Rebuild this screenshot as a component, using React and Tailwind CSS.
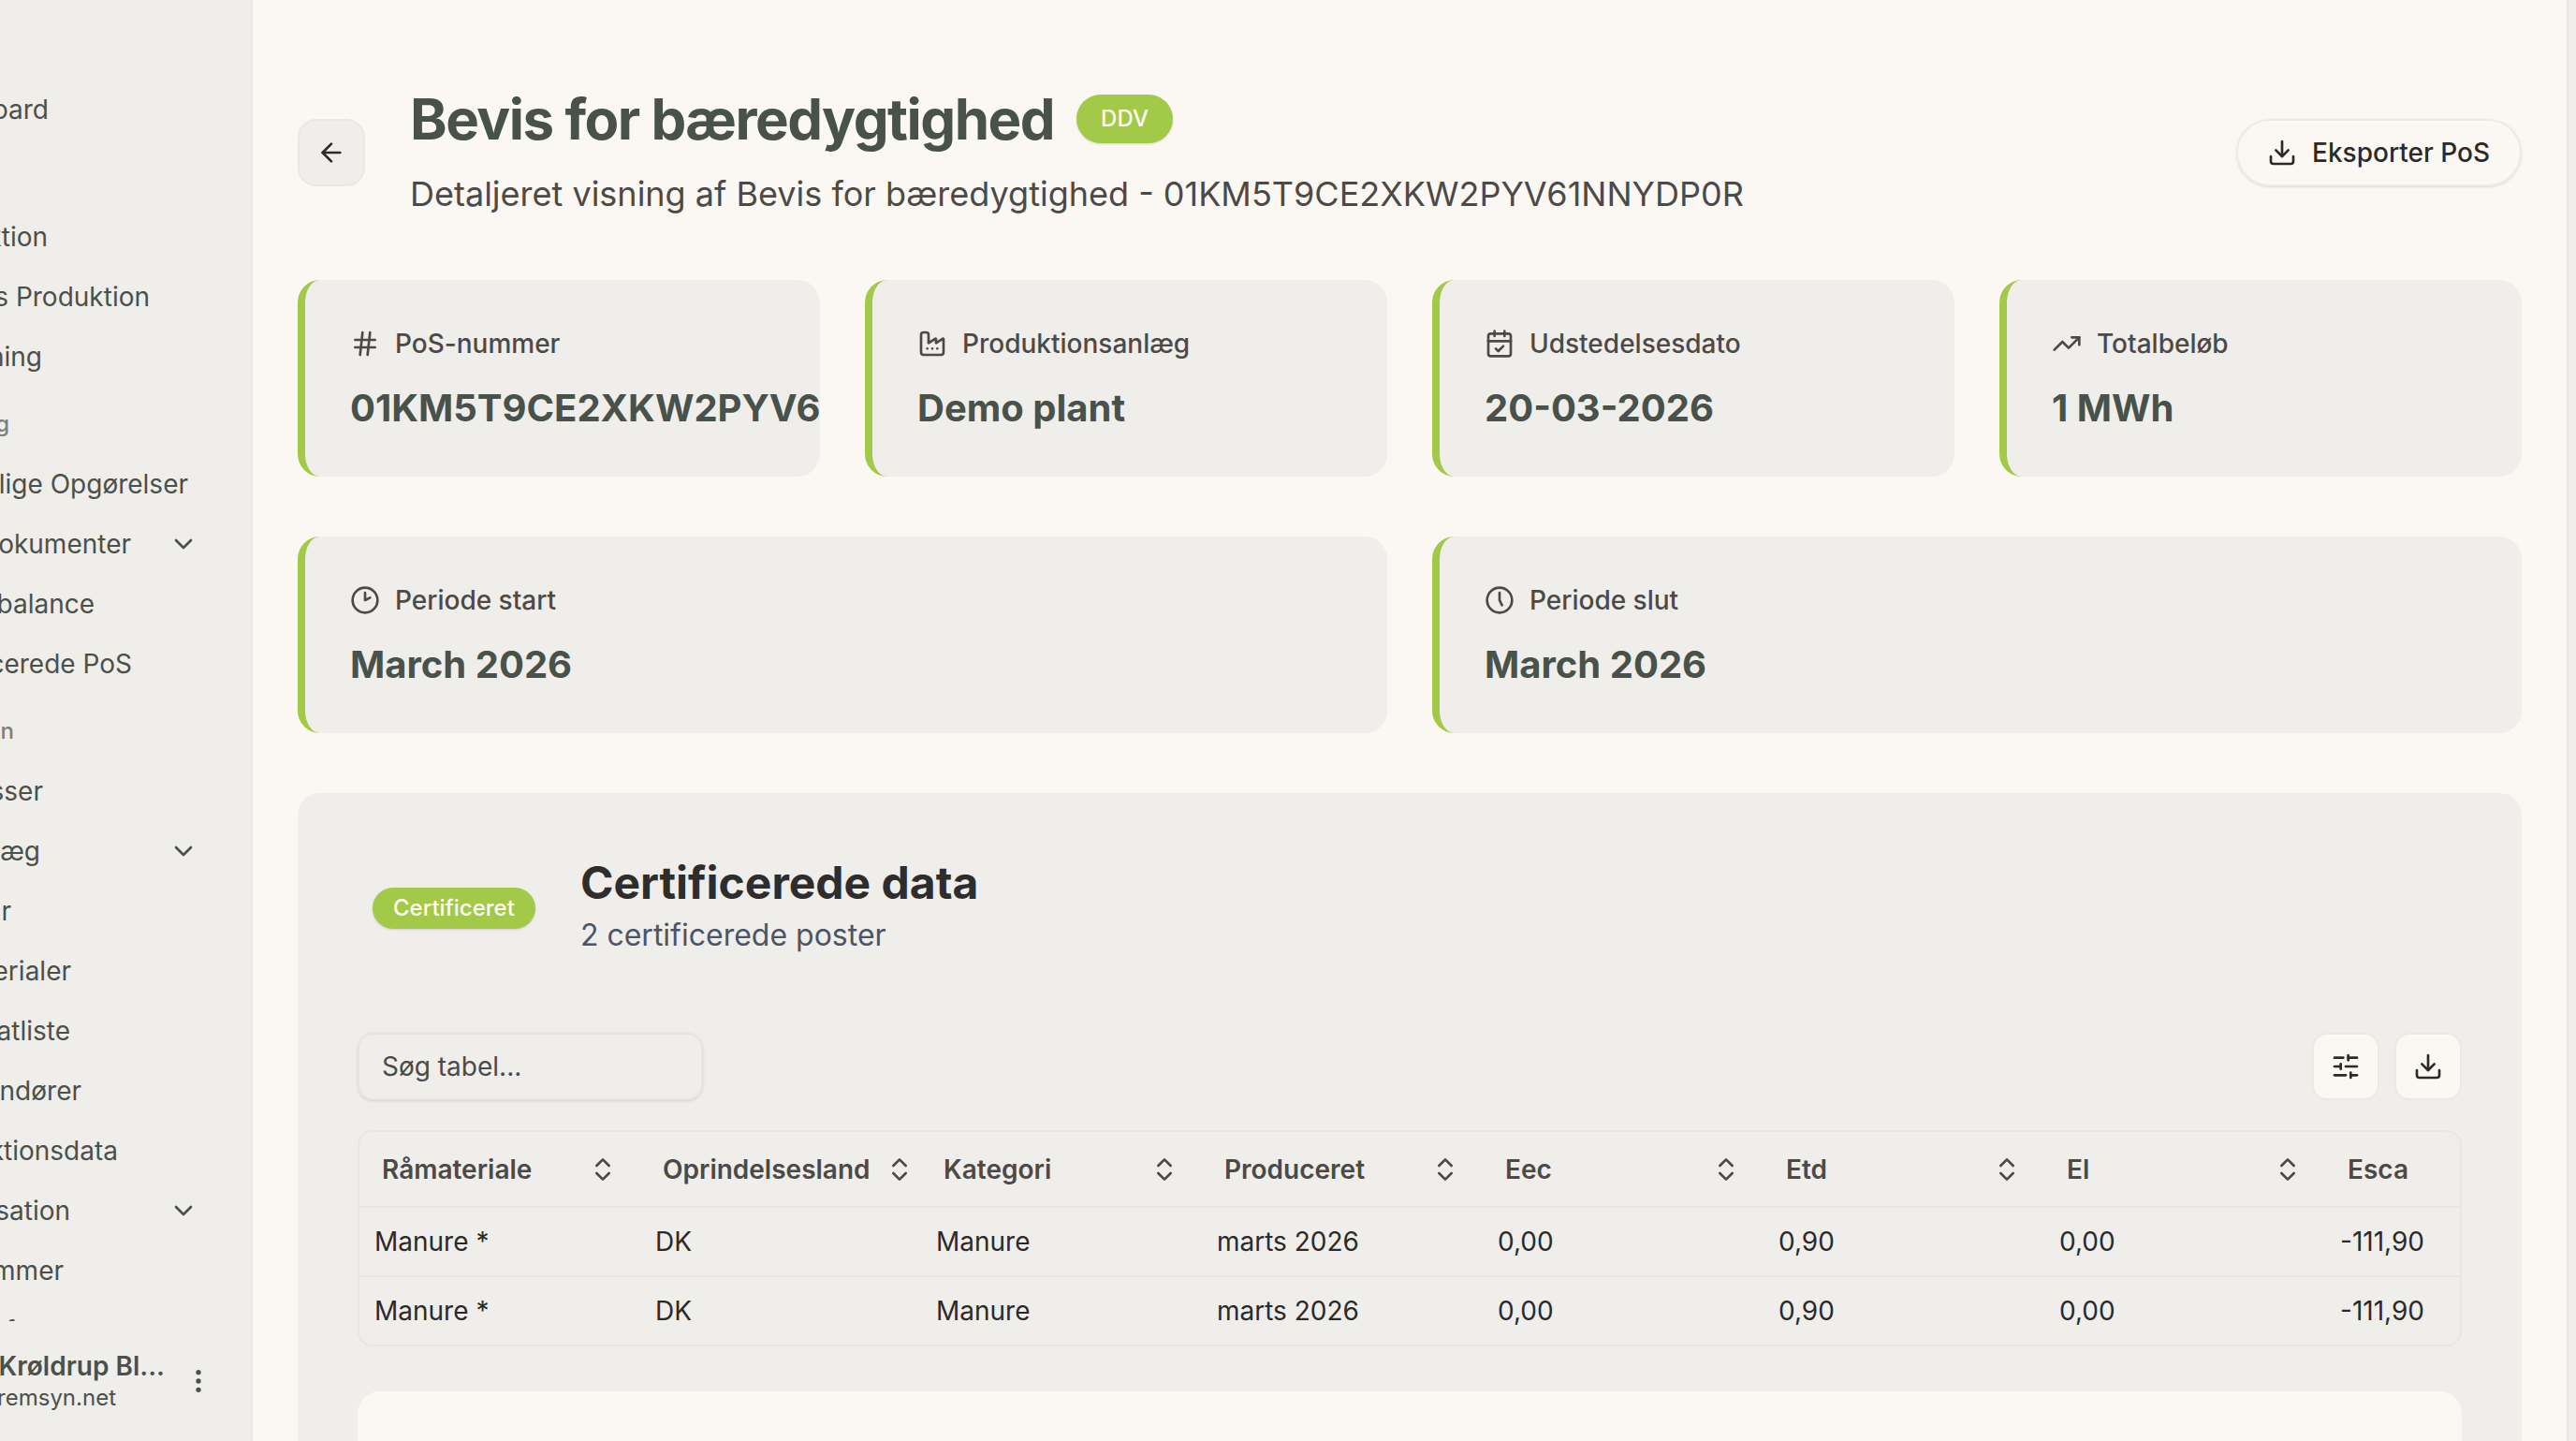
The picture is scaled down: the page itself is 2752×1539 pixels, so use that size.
// src/screens/pos/PosDetail.jsx
import React, { useState } from 'react';
import {
  ArrowLeft, CalendarCheck, ChevronDown, ChevronsUpDown, Clock2, Clock5, Download,
  EllipsisVertical, Hash, SlidersHorizontal, TrendingUp
} from 'lucide-react';

// end = where the label stops, the start is scrolled out to the left
const nav = [
  { label:'board', end:52 },
  { heading:'', end:0 },
  { label:'ktion', end:51 },
  { label:'s Produktion', end:160 },
  { label:'ning', end:45 },
  { heading:'g', end:10 },
  { label:'lige Opgørelser', end:201 },
  { label:'okumenter', end:140, more:true },
  { label:'balance', end:101 },
  { label:'cerede PoS', end:141 },
  { heading:'n', end:15 },
  { label:'sser', end:46 },
  { label:'æg', end:43, more:true },
  { label:'r', end:12 },
  { label:'erialer', end:76 },
  { label:'atliste', end:75 },
  { label:'ndører', end:87 },
  { label:'ktionsdata', end:126 },
  { label:'sation', end:75, more:true },
  { label:'mmer', end:68 },
  { label:'f', end:16 },
];

const columns = ['Råmateriale', 'Oprindelsesland', 'Kategori', 'Produceret', 'Eec', 'Etd', 'El', 'Esca'];

const rows = [
  ['Manure *', 'DK', 'Manure', 'marts 2026', '0,00', '0,90', '0,00', '-111,90'],
  ['Manure *', 'DK', 'Manure', 'marts 2026', '0,00', '0,90', '0,00', '-111,90'],
];

function FactoryIcon({ className }){
  return (
    <svg className={className} viewBox="0 0 24 24" fill="none" stroke="currentColor" strokeWidth="2" strokeLinecap="round" strokeLinejoin="round">
      <path d="M5 3a2 2 0 0 0-2 2v14a2 2 0 0 0 2 2h14a2 2 0 0 0 2-2V8.500a.5.5 0 0 0-.77-.42L15 11.500V8.500a.5.5 0 0 0-.77-.42L9 11.500V5a2 2 0 0 0-2-2z" />
      <path d="M8 16h.01M12 16h.01M16 16h.01" />
    </svg>
  );
}

function NavItem({ item }){
  if (item.heading !== undefined) {
    return (
      <div className="h-16 mt-2 flex items-center text-2xl font-medium text-[#7d807b] shrink-0">
        <span className="flex justify-end whitespace-nowrap" style={{ width:item.end }}>{item.heading}</span>
      </div>
    );
  }
  return (
    <div className="h-16 flex items-center justify-between pr-14 shrink-0">
      <span className="flex justify-end whitespace-nowrap" style={{ width:item.end }}>{item.label}</span>
      {item.more && <ChevronDown className="size-8" />}
    </div>
  );
}

function Sidebar(){
  return (
    <aside className="w-[270px] h-full shrink-0 flex flex-col overflow-hidden bg-[#efeeea] border-r-2 border-[#e9e8e4] text-[28px] text-[#4b504b]">
      <nav className="h-[1411px] pt-[85px] flex flex-col overflow-hidden">
        {nav.map((item, i) => <NavItem key={i} item={item} />)}
      </nav>
      <div className="flex items-center justify-between pt-[30px] pr-10">
        <div>
          <div className="flex justify-end w-[176px] whitespace-nowrap font-semibold leading-9">Krøldrup Bl...</div>
          <div className="flex justify-end w-[124px] whitespace-nowrap text-2xl leading-8">remsyn.net</div>
        </div>
        <EllipsisVertical className="size-8" />
      </div>
    </aside>
  );
}

function StatCard({ icon:Icon, label, value }){
  return (
    <div className="h-[210px] min-w-0 overflow-hidden bg-[#efeeea] border-l-8 border-[#a3c949] rounded-3xl pl-12 pt-12">
      <div className="flex items-center gap-4 text-[28px] leading-10 font-medium text-[#4c4947]">
        <Icon className="size-8" />
        <span>{label}</span>
      </div>
      <div className="mt-[21px] text-[40px] leading-14 font-bold text-[#48524a] whitespace-nowrap">{value}</div>
    </div>
  );
}

export default function App(){
  const [search, setSearch] = useState('');

  return (
    <div className="h-[1539px] w-full flex overflow-hidden bg-[#fbf8f3] font-['Inter',sans-serif]">
      <Sidebar />

      <main className="flex-1 min-w-0 px-12 flex flex-col overflow-hidden">
        <header className="mt-[91px] h-36 shrink-0 flex items-center">
          <button className="size-[72px] flex items-center justify-center rounded-[20px] bg-[#efeeea] border-2 border-[#e9e8e4] text-[#2c2a28]">
            <ArrowLeft className="size-8" />
          </button>
          <div className="ml-12 flex-1">
            <div className="flex items-center gap-6 h-[72px]">
              <h1 className="text-[60px] leading-[72px] font-bold tracking-tight text-[#48524a]">Bevis for bæredygtighed</h1>
              <span className="h-[52px] px-[26px] flex items-center rounded-full bg-[#a3c949] text-2xl font-medium text-[#fdfbf4] shadow">DDV</span>
            </div>
            <p className="mt-4 text-4xl leading-14 text-[#4c4947]">Detaljeret visning af Bevis for bæredygtighed - 01KM5T9CE2XKW2PYV61NNYDP0R</p>
          </div>
          <button className="h-[72px] pl-[31px] pr-8 flex items-center gap-4 rounded-full border-2 border-[#edeae6] shadow-sm text-[28px] font-medium text-[#2c2a28]">
            <Download className="size-8" />
            Eksporter PoS
          </button>
        </header>

        <div className="mt-16 grid grid-cols-4 gap-12">
          <StatCard icon={Hash} label="PoS-nummer" value="01KM5T9CE2XKW2PYV6" />
          <StatCard icon={FactoryIcon} label="Produktionsanlæg" value="Demo plant" />
          <StatCard icon={CalendarCheck} label="Udstedelsesdato" value="20-03-2026" />
          <StatCard icon={TrendingUp} label="Totalbeløb" value="1 MWh" />
        </div>

        <div className="mt-16 grid grid-cols-2 gap-12">
          <StatCard icon={Clock2} label="Periode start" value="March 2026" />
          <StatCard icon={Clock5} label="Periode slut" value="March 2026" />
        </div>

        <section className="mt-16 h-[800px] shrink-0 rounded-3xl bg-[#efeeea] px-16 pt-[66px]">
          <div className="pl-4 flex items-center gap-12">
            <span className="h-11 px-[22px] flex items-center rounded-full bg-[#a3c949] text-2xl font-medium text-[#fdfbf4] shadow">Certificeret</span>
            <div>
              <h2 className="text-5xl leading-[60px] font-bold text-[#2f2d2b]">Certificerede data</h2>
              <p className="text-[32px] leading-[52px] pb-0.5 text-[#4a5568]">2 certificerede poster</p>
            </div>
          </div>

          <div className="mt-[76px] flex items-center justify-between">
            <input className="w-[369px] h-[72px] px-6 rounded-2xl border-2 border-[#e6e4e0] shadow-sm text-[28px] text-[#4c4947] placeholder:text-[#4c4947]" placeholder="Søg tabel..." value={search} onChange={e=>setSearch(e.target.value)} />
            <div className="flex gap-4 text-[#2c2a28]">
              <button className="size-[72px] flex items-center justify-center rounded-2xl bg-[#fbf8f3] border-2 border-[#ebe9e5]">
                <SlidersHorizontal className="size-8" />
              </button>
              <button className="size-[72px] flex items-center justify-center rounded-2xl bg-[#fbf8f3] border-2 border-[#ebe9e5]">
                <Download className="size-8" />
              </button>
            </div>
          </div>

          <div className="mt-8 rounded-2xl border-2 border-[#e8e7e3] overflow-hidden text-[28px]">
            <div className="flex h-[81px] border-b-2 border-[#e8e7e3] font-semibold text-[#4c4947]">
              {columns.map(c => (
                <div key={c} className="w-[300px] shrink-0 px-6 flex items-center justify-between gap-[15px]">
                  <span>{c}</span>
                  <ChevronsUpDown className="size-8 shrink-0" />
                </div>
              ))}
            </div>
            {rows.map((r, i) => (
              <div key={i} className="flex h-[74px] items-center border-b-2 last:border-b-0 last:h-[72px] border-[#e8e7e3] text-[#2c2a28]">
                {r.map((v, j) => <div key={j} className="w-[300px] shrink-0 px-4">{v}</div>)}
              </div>
            ))}
          </div>

          <div className="mt-12 h-40 rounded-3xl bg-[#fbf8f3]" />
        </section>
      </main>

      <div className="w-2.5 h-full shrink-0 bg-[#f0eeea] border-l-2 border-[#e9e7e3]" />
    </div>
  );
}
